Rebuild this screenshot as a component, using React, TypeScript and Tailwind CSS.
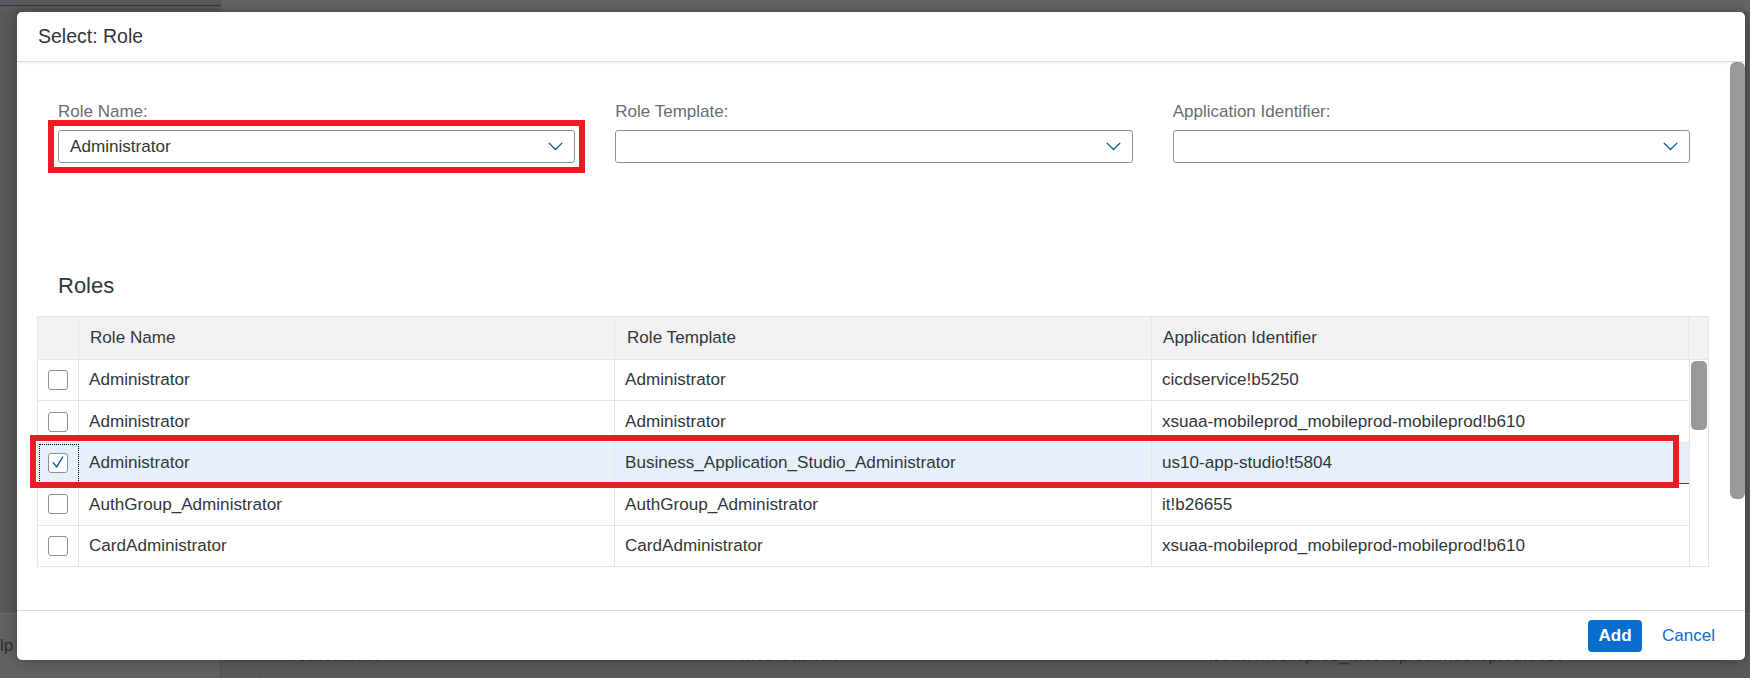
import clsx from "clsx";

interface RoleRow {
  name: string;
  template: string;
  app: string;
  selected?: boolean;
}

const ROWS: RoleRow[] = [
  { name: "Administrator", template: "Administrator", app: "cicdservice!b5250" },
  {
    name: "Administrator",
    template: "Administrator",
    app: "xsuaa-mobileprod_mobileprod-mobileprod!b610",
  },
  {
    name: "Administrator",
    template: "Business_Application_Studio_Administrator",
    app: "us10-app-studio!t5804",
    selected: true,
  },
  {
    name: "AuthGroup_Administrator",
    template: "AuthGroup_Administrator",
    app: "it!b26655",
  },
  {
    name: "CardAdministrator",
    template: "CardAdministrator",
    app: "xsuaa-mobileprod_mobileprod-mobileprod!b610",
  },
];

const COLS = "grid grid-cols-[41px_536px_537px_537px_19px]";

function Chevron() {
  return (
    <svg width="15" height="9" viewBox="0 0 15 9" fill="none" className="shrink-0">
      <polyline
        points="0.8,0.9 7.5,7.5 14.2,0.9"
        stroke="#0854a0"
        strokeWidth="1.3"
        strokeLinejoin="miter"
      />
    </svg>
  );
}

function SelectField({ label, value, marked }: { label: string; value?: string; marked?: boolean }) {
  return (
    <div className="flex flex-col">
      <label className="mb-[8px] text-[17px] leading-[20px] text-[#6a6d70]">{label}</label>
      <div className="relative">
        <div className="flex h-[33px] items-center justify-between rounded-[3px] border border-[#89919a] bg-white pl-[11px] pr-[11px]">
          <span className="text-[17.1px] text-[#32363a]">{value}</span>
          <Chevron />
        </div>
        {marked && (
          <span className="pointer-events-none absolute -inset-[10px] border-[6px] border-[#ed1c24]" />
        )}
      </div>
    </div>
  );
}

function Checkbox({ checked }: { checked?: boolean }) {
  return (
    <span className="flex h-[20px] w-[20px] items-center justify-center rounded-[3px] border border-[#89919a] bg-white">
      {checked && (
        <svg width="20" height="20" viewBox="0 0 20 20" fill="none">
          <polyline
            points="4.6,9.6 8.6,14.4 15.2,3.4"
            stroke="#0854a0"
            strokeWidth="1.5"
            strokeLinecap="round"
            strokeLinejoin="round"
          />
        </svg>
      )}
    </span>
  );
}

function RolesTable() {
  return (
    <div className="relative ml-[20px] w-[1672px] border-x border-t border-[#e5e5e5]">
      {/* header */}
      <div className={clsx(COLS, "h-[43px] border-b border-[#e5e5e5] bg-[#f2f2f2] text-[17.1px] text-[#32363a]")}>
        <div className="border-r border-[#e5e5e5]" />
        <div className="flex items-center border-r border-[#e5e5e5] px-[11px]">Role Name</div>
        <div className="flex items-center border-r border-[#e5e5e5] px-[12px]">Role Template</div>
        <div className="flex items-center border-r border-[#e5e5e5] px-[11px]">Application Identifier</div>
        <div />
      </div>

      {/* body */}
      <div className="flex">
        <div className="w-[1651px]">
          {ROWS.map((row, i) => (
            <div
              key={i}
              className={clsx(
                "grid h-[41.4px] grid-cols-[41px_536px_537px_537px] border-b text-[17.1px] text-[#32363a]",
                row.selected ? "border-[#0854a0] bg-[#e5f0fa]" : "border-[#e5e5e5] bg-white",
              )}
            >
              <div className="relative flex items-center justify-center border-r border-[#e5e5e5]">
                <Checkbox checked={row.selected} />
                {row.selected && (
                  <span className="pointer-events-none absolute -right-px bottom-0 left-[1px] top-[1px] border border-dotted border-black" />
                )}
              </div>
              <div className="flex items-center border-r border-[#e5e5e5] px-[10px]">{row.name}</div>
              <div className="flex items-center border-r border-[#e5e5e5] px-[10px]">{row.template}</div>
              <div className="flex items-center px-[10px]">{row.app}</div>
            </div>
          ))}
        </div>
        <div className="flex-1 border-b border-l border-[#e5e5e5] px-px pt-px">
          <div className="h-[69px] rounded-[5px] bg-[#999999]" />
        </div>
      </div>

      {/* annotation around the chosen row */}
      <span className="pointer-events-none absolute left-[-8px] top-[118px] h-[53px] w-[1649px] border-[6px] border-[#ed1c24]" />
    </div>
  );
}

function Dialog() {
  return (
    <div className="absolute left-[17px] top-[12px] flex h-[648px] w-[1728px] flex-col overflow-hidden rounded-[5px] bg-white shadow-[0_0_14px_rgba(0,0,0,0.35)]">
      <header className="relative z-10 flex h-[50px] shrink-0 items-center border-b border-[#d9d9d9] pl-[21px] text-[19.5px] text-[#32363a] shadow-[0_1px_3px_rgba(0,0,0,0.07)]">
        Select: Role
      </header>

      <div className="flex min-h-0 flex-1">
        <div className="flex-1">
          <div className="grid grid-cols-3 gap-x-[40px] pl-[41px] pr-[40px] pt-[40px]">
            <SelectField label="Role Name:" value="Administrator" marked />
            <SelectField label="Role Template:" />
            <SelectField label="Application Identifier:" />
          </div>

          <h2 className="mb-[17px] ml-[41px] mt-[110px] text-[22px] leading-[26px] text-[#32363a]">Roles</h2>

          <RolesTable />
        </div>
        <div className="w-[15px] shrink-0">
          <div className="h-[437px] rounded-[6px] bg-[#999999]" />
        </div>
      </div>

      <footer className="flex h-[50px] shrink-0 items-center justify-end border-t border-[#d9d9d9] pr-[30px]">
        <button
          type="button"
          className="h-[32px] w-[54px] rounded-[4px] bg-[#0a6ed1] text-[17px] font-bold text-white"
        >
          Add
        </button>
        <button type="button" className="ml-[20px] text-[17px] text-[#0a6ed1]">
          Cancel
        </button>
      </footer>
    </div>
  );
}

function Backdrop() {
  return (
    <div className="flex h-full flex-col">
      <div className="flex h-[12px] shrink-0">
        <div className="w-[221px] bg-[#5b5b5b]">
          <div className="h-[5px]" />
          <div className="h-px bg-[#2e3a4a]" />
        </div>
        <div className="flex-1 bg-[#656565]" />
      </div>
      <div className="flex-1 bg-[#595959]" />
      <div className="flex h-[65px] shrink-0 border-t border-[#6f6f6f]">
        <div className="w-[221px] border-r border-[#4f4f4f] bg-[#626262]">
          <div className="mt-[22px] text-[17px] leading-[20px] text-[#2c2c2c]">lp</div>
        </div>
        <div className="w-[40px] border-r border-[#555555] bg-[#5a5a5a]" />
        <div className="flex flex-1 bg-[#5a5a5a] pt-[32px] text-[17px] leading-[20px] text-[#333333]">
          <span className="ml-[22px] w-[458px]">Mobileadmin</span>
          <span className="w-[463px]">Mobileadmin</span>
          <span>xsuaa-mobileprod_mobileprod-mobileprod!b610</span>
        </div>
      </div>
    </div>
  );
}

export default function App() {
  return (
    <div className="relative h-[678px] w-[1750px] overflow-hidden bg-[#595959] font-['Liberation_Sans',Arial,sans-serif]">
      <Backdrop />
      <Dialog />
    </div>
  );
}
